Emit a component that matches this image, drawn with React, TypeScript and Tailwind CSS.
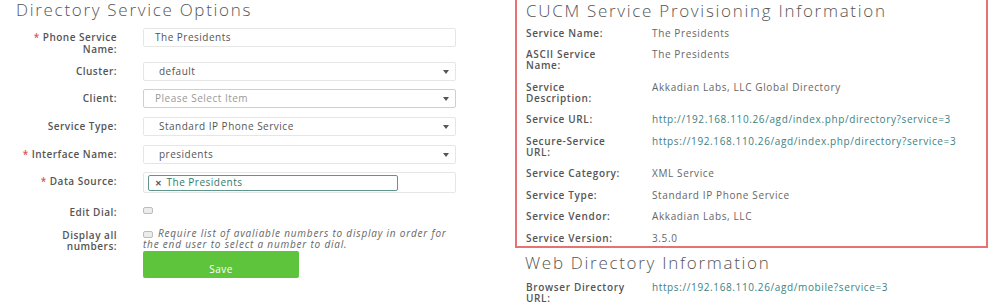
import React from "react";

const font = { fontFamily: '"Open Sans", "Liberation Sans", sans-serif' };

function Arrow() {
  return (
    <svg width="6" height="4" viewBox="0 0 6 4" className="shrink-0">
      <path d="M0 0 L6 0 L3 4 Z" fill="#555" />
    </svg>
  );
}

function Label({ lines, req, pad = "pt-[3px]", lead = "leading-[12px]" }: { lines: string[]; req?: boolean; pad?: string; lead?: string }) {
  return (
    <div className={`w-[117px] shrink-0 ${pad} text-right text-[10px] ${lead} font-semibold tracking-[0.5px] text-[#555]`}>
      {lines.map((l, i) => (
        <div key={i}>
          {i === 0 && req ? <span className="text-[#d9534f] mr-[3px]">*</span> : null}
          {l}
        </div>
      ))}
    </div>
  );
}

function Box({ children, arrow, pl = "pl-[15px]", border = "border-[#e6e6e6]" }: { children: React.ReactNode; arrow?: boolean; pl?: string; border?: string }) {
  return (
    <div className={`w-[313px] h-[19px] border ${border} rounded-[2px] bg-white flex items-center justify-between ${pl} pr-[6px] text-[10px] tracking-[0.5px] text-[#555]`}>
      <span>{children}</span>
      {arrow ? <Arrow /> : null}
    </div>
  );
}

function Row({ h, children }: { h: string; children: React.ReactNode }) {
  return <div className={`flex items-start gap-[26px] ${h}`}>{children}</div>;
}

function Check() {
  return <div className="w-[10px] h-[7px] rounded-[2px] border border-[#bdbdbd] bg-[#ececec]" />;
}

function InfoRow({ label, value, link }: { label: string[]; value: string; link?: boolean }) {
  return (
    <div className="flex text-[10px] leading-[11px]">
      <div className="w-[126px] shrink-0 font-semibold tracking-[0.65px] text-[#555]">
        {label.map((l, i) => (
          <div key={i}>{l}</div>
        ))}
      </div>
      <div className={link ? "tracking-[0.62px] text-[#3b8282]" : "tracking-[0.62px] text-[#666]"}>{value}</div>
    </div>
  );
}

export default function App() {
  return (
    <div style={font} className="w-[1000px] h-[302px] overflow-hidden bg-white flex">
      {/* Left */}
      <div className="w-[515px] shrink-0">
        <div className="pl-[16px] h-[28px] text-[17px] leading-[20px] font-light tracking-[1.7px] text-[#555]">
          Directory Service Options
        </div>
        <Row h="h-[34px]">
          <Label lines={["Phone Service", "Name:"]} req />
          <Box pl="pl-[11px]">The Presidents</Box>
        </Row>
        <Row h="h-[27px]">
          <Label lines={["Cluster:"]} />
          <Box arrow>default</Box>
        </Row>
        <Row h="h-[28px]">
          <Label lines={["Client:"]} />
          <Box arrow pl="pl-[11px]" border="border-[#cfcfcf]">
            <span className="text-[#999]">Please Select Item</span>
          </Box>
        </Row>
        <Row h="h-[28px]">
          <Label lines={["Service Type:"]} />
          <Box arrow>Standard IP Phone Service</Box>
        </Row>
        <Row h="h-[27px]">
          <Label lines={["Interface Name:"]} req />
          <Box arrow>presidents</Box>
        </Row>
        <Row h="h-[35px]">
          <Label lines={["Data Source:"]} req />
          <div className="w-[313px] h-[21px] border border-[#e6e6e6] rounded-[2px] bg-white flex items-center pl-[4px]">
            <div className="w-[250px] h-[16px] border border-[#5e968c] rounded-[2px] flex items-center pl-[6px] text-[10px] tracking-[0.5px] text-[#2f7b6c]">
              <span className="text-[8px] font-bold text-[#555] mr-[4px]">✕</span>
              The Presidents
            </div>
          </div>
        </Row>
        <Row h="h-[21px]">
          <Label lines={["Edit Dial:"]} pad="pt-0 mt-[-1px]" />
          <Check />
        </Row>
        <Row h="h-[23px]">
          <Label lines={["Display all", "numbers:"]} pad="pt-[2px]" lead="leading-[11px]" />
          <div className="w-[313px] text-[10px] leading-[10.5px] italic tracking-[0.8px] text-[#666]">
            <span className="inline-block align-middle mr-[5px]">
              <Check />
            </span>
            Require list of avaliable numbers to display in order for
            <br />
            the end user to select a number to dial.
          </div>
        </Row>
        <div className="flex">
          <div className="w-[143px] shrink-0" />
          <button className="w-[156px] h-[27px] bg-[#5dc43c] text-white text-[10px] tracking-[0.5px] rounded-[2px] flex items-center justify-center pt-[9px]">
            Save
          </button>
        </div>
      </div>

      {/* Right */}
      <div className="w-[485px] shrink-0">
        <div className="w-[473px] mt-[-2px] border-2 border-solid border-[#e57373] pl-[9px] pb-[2px]">
          <div className="h-[22px] leading-[22px] text-[17px] font-light tracking-[1.7px] text-[#555] mb-[5.5px]">
            CUCM Service Provisioning Information
          </div>
          <div className="flex flex-col gap-[10.5px]">
            <InfoRow label={["Service Name:"]} value="The Presidents" />
            <InfoRow label={["ASCII Service", "Name:"]} value="The Presidents" />
            <InfoRow label={["Service", "Description:"]} value="Akkadian Labs, LLC Global Directory" />
            <InfoRow label={["Service URL:"]} value="http://192.168.110.26/agd/index.php/directory?service=3" link />
            <InfoRow label={["Secure-Service", "URL:"]} value="https://192.168.110.26/agd/index.php/directory?service=3" link />
            <InfoRow label={["Service Category:"]} value="XML Service" />
            <InfoRow label={["Service Type:"]} value="Standard IP Phone Service" />
            <InfoRow label={["Service Vendor:"]} value="Akkadian Labs, LLC" />
            <InfoRow label={["Service Version:"]} value="3.5.0" />
          </div>
        </div>
        <div className="pl-[10px] mt-[4px] h-[22px] leading-[22px] text-[17px] font-light tracking-[1.7px] text-[#555] mb-[8px]">
          Web Directory Information
        </div>
        <div className="pl-[11px]">
          <InfoRow label={["Browser Directory", "URL:"]} value="https://192.168.110.26/agd/mobile?service=3" link />
        </div>
      </div>
    </div>
  );
}
